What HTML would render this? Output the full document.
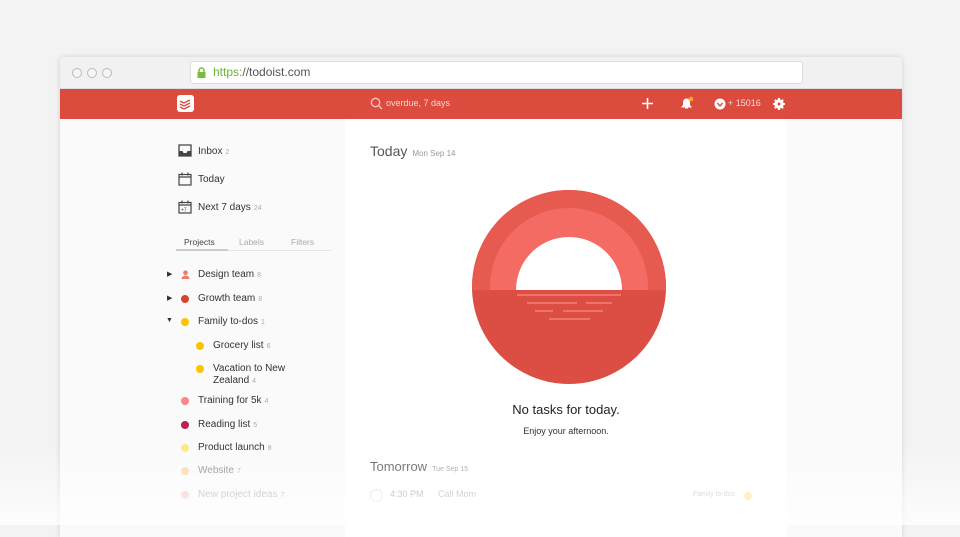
<!DOCTYPE html>
<html><head><style>
*{margin:0;padding:0;box-sizing:border-box}
body{width:960px;height:525px;overflow:hidden;background:#f3f3f3;font-family:"Liberation Sans",sans-serif;position:relative}
.win{position:absolute;left:60px;top:57px;width:842px;height:480px;background:#fafafa;box-shadow:0 0 6px rgba(0,0,0,.15);border-radius:4px 4px 0 0;overflow:hidden}
.chrome{position:absolute;left:0;top:0;width:842px;height:32px;background:#f1f1f1;border-bottom:1px solid #ddd}
.dot{position:absolute;top:11px;width:10px;height:10px;border-radius:50%;border:1px solid #bbb;background:#f5f5f5}
.url{position:absolute;left:130px;top:4px;width:613px;height:23px;background:#fff;border:1px solid #ddd;border-radius:3px;font-size:12px;line-height:21px;color:#555;padding-left:22px}
.bar{position:absolute;left:0;top:32px;width:842px;height:30px;background:#db4c3f}
.side{position:absolute;left:0;top:62px;width:285px;height:420px;background:#fafafa}
.main{position:absolute;left:285px;top:62px;width:442px;height:420px;background:#fff}
.t{position:absolute;font-size:10px;color:#333;white-space:nowrap}
.c{color:#aaa;font-size:7px;margin-left:3px}
.pd{position:absolute;width:8px;height:8px;border-radius:50%}
.fade{position:absolute;left:0;top:445px;width:960px;height:80px;background:linear-gradient(rgba(255,255,255,0),rgba(255,255,255,.8))}
</style></head><body>
<div class="win">
<div class="chrome">
<div class="dot" style="left:12px"></div><div class="dot" style="left:27px"></div><div class="dot" style="left:42px"></div>
<div class="url"><svg style="position:absolute;left:6px;top:5px" width="9" height="11"><path d="M2 5V3.5a2.5 2.5 0 015 0V5" stroke="#7cbc3a" stroke-width="1.5" fill="none"/><rect x="0.5" y="5" width="8" height="6" fill="#7cbc3a"/></svg><span style="color:#6bb33a">https:</span>//todoist.com</div>
</div>
<div class="bar">
<div style="position:absolute;left:117px;top:6px;width:17px;height:17px;background:#fff;border-radius:3px"><svg width="17" height="17"><path d="M3 6l4 2 6-3M3 9l4 2 6-3M3 12l4 2 6-3" stroke="#db4c3f" stroke-width="1.4" fill="none"/></svg></div>
<svg style="position:absolute;left:310px;top:8px" width="13" height="13"><circle cx="5.5" cy="5.5" r="4.2" stroke="#f5c6c1" stroke-width="1.3" fill="none"/><path d="M8.5 8.5l3.5 3.5" stroke="#f5c6c1" stroke-width="1.3"/></svg>
<div class="t" style="left:326px;top:9px;color:#f7d4d0;font-size:9px">overdue, 7 days</div>
<svg style="position:absolute;left:581px;top:8px" width="13" height="13"><path d="M6.5 1v11M1 6.5h11" stroke="#fff" stroke-width="1.6"/></svg>
<svg style="position:absolute;left:620px;top:7px" width="14" height="14"><path d="M2 11h9l-1.5-2V6a3 3 0 00-6 0v3z M5 12h3" fill="#fff" stroke="#fff"/><circle cx="11" cy="3" r="2.3" fill="#f9a825"/></svg>
<svg style="position:absolute;left:654px;top:9px" width="12" height="12"><circle cx="6" cy="6" r="5.5" fill="#fff"/><path d="M3.3 5l2.7 3 2.7-3" stroke="#db4c3f" stroke-width="1.4" fill="none"/></svg>
<div class="t" style="left:668px;top:9px;color:#f9dad6;font-size:9px">+ 15016</div>
<svg style="position:absolute;left:713px;top:9px" width="12" height="12"><circle cx="6" cy="6" r="3.6" fill="none" stroke="#fff" stroke-width="2.2"/><path d="M6 0v12M0 6h12M1.8 1.8l8.4 8.4M10.2 1.8l-8.4 8.4" stroke="#fff" stroke-width="2"/><circle cx="6" cy="6" r="1.5" fill="#db4c3f"/></svg>
</div>
<div class="side">
<svg style="position:absolute;left:118px;top:25px" width="14" height="13"><path d="M1 1h12v11H1z" fill="none" stroke="#444" stroke-width="1.3"/><path d="M1 7h3.5l1 2h3l1-2H13v5H1z" fill="#444"/></svg>
<div class="t" style="left:138px;top:27px">Inbox<span class="c">2</span></div>
<svg style="position:absolute;left:118px;top:53px" width="14" height="14"><rect x="1" y="2.5" width="12" height="10.5" fill="none" stroke="#444" stroke-width="1.2"/><path d="M1 5h12M4 0.5v3M10 0.5v3" stroke="#444" stroke-width="1.2"/></svg>
<div class="t" style="left:138px;top:55px">Today</div>
<svg style="position:absolute;left:118px;top:81px" width="14" height="14"><rect x="1" y="2.5" width="12" height="10.5" fill="none" stroke="#444" stroke-width="1.2"/><path d="M1 5h12M4 0.5v3M10 0.5v3" stroke="#444" stroke-width="1.2"/><text x="3" y="11.5" font-size="5" fill="#444" font-family="Liberation Sans">+7</text></svg>
<div class="t" style="left:138px;top:83px">Next 7 days<span class="c">24</span></div>
<div class="t" style="left:124px;top:118px;font-size:8.5px;color:#444">Projects</div>
<div class="t" style="left:179px;top:118px;font-size:8.5px;color:#aaa">Labels</div>
<div class="t" style="left:231px;top:118px;font-size:8.5px;color:#aaa">Filters</div>
<div style="position:absolute;left:116px;top:131px;width:155px;height:1px;background:#e5e5e5"></div>
<div style="position:absolute;left:116px;top:130px;width:52px;height:2px;background:#ccc"></div>

<div class="t" style="left:107px;top:151px;font-size:7px;color:#333">▶</div>
<svg style="position:absolute;left:121px;top:151px" width="9" height="9"><circle cx="4.5" cy="2.7" r="2.3" fill="#f27a67"/><path d="M0.5 9a4 3.5 0 018 0z" fill="#f27a67"/></svg>
<div class="t" style="left:138px;top:150px">Design team<span class="c">8</span></div>
<div class="t" style="left:107px;top:175px;font-size:7px;color:#333">▶</div>
<div class="pd" style="left:121px;top:176px;background:#d5452c"></div>
<div class="t" style="left:138px;top:174px">Growth team<span class="c">8</span></div>
<div class="t" style="left:106px;top:198px;font-size:7px;color:#333">▼</div>
<div class="pd" style="left:121px;top:199px;background:#fcc400"></div>
<div class="t" style="left:138px;top:197px">Family to-dos<span class="c">1</span></div>
<div class="pd" style="left:136px;top:223px;background:#fcc400"></div>
<div class="t" style="left:153px;top:221px">Grocery list<span class="c">6</span></div>
<div class="pd" style="left:136px;top:246px;background:#fcc400"></div>
<div class="t" style="left:153px;top:244px">Vacation to New</div>
<div class="t" style="left:153px;top:256px">Zealand<span class="c">4</span></div>
<div class="pd" style="left:121px;top:278px;background:#fb8884"></div>
<div class="t" style="left:138px;top:276px">Training for 5k<span class="c">4</span></div>
<div class="pd" style="left:121px;top:302px;background:#b8254a"></div>
<div class="t" style="left:138px;top:300px">Reading list<span class="c">5</span></div>
<div class="pd" style="left:121px;top:325px;background:#fbe983"></div>
<div class="t" style="left:138px;top:323px">Product launch<span class="c">8</span></div>
<div class="pd" style="left:121px;top:348px;background:#fdd7a7"></div>
<div class="t" style="left:138px;top:346px;color:#888">Website<span class="c">7</span></div>
<div class="pd" style="left:121px;top:372px;background:#f3c6c0"></div>
<div class="t" style="left:138px;top:370px;color:#aaa">New project ideas<span class="c">7</span></div>
</div>
<div class="main">
<div class="t" style="left:25px;top:24px;font-size:14px;color:#555">Today<span style="font-size:8px;color:#999;margin-left:5px">Mon Sep 14</span></div>
<svg style="position:absolute;left:126px;top:70px" width="196" height="196">
<defs><clipPath id="top"><rect x="0" y="0" width="196" height="101"/></clipPath></defs>
<circle cx="98" cy="98" r="97" fill="#dc4e43"/>
<g clip-path="url(#top)"><circle cx="98" cy="98" r="97" fill="#e75a50"/><circle cx="98" cy="98" r="79" fill="#f46b63"/><circle cx="98" cy="101" r="53" fill="#fff"/></g>
<g stroke="#f0736a" stroke-width="2"><path d="M46 106h104M56 114h50M115 114h26M64 122h18M92 122h40M78 130h41"/></g>
</svg>
<div class="t" style="left:0;width:442px;text-align:center;top:283px;font-size:13px;color:#222">No tasks for today.</div>
<div class="t" style="left:0;width:442px;text-align:center;top:307px;font-size:9px;color:#333">Enjoy your afternoon.</div>
<div class="t" style="left:25px;top:340px;font-size:13px;color:#555">Tomorrow<span style="font-size:7px;color:#999;margin-left:5px">Tue Sep 15</span></div>
<div style="position:absolute;left:25px;top:370px;width:13px;height:13px;border-radius:50%;border:1px solid #ddd"></div>
<div class="t" style="left:45px;top:370px;font-size:9px;color:#999">4:30 PM</div>
<div class="t" style="left:93px;top:370px;font-size:9px;color:#aaa">Call Mom</div>
<div class="t" style="left:348px;top:372px;font-size:7px;color:#bbb">Family to-dos</div>
<div class="pd" style="left:399px;top:373px;background:#fde58a"></div>
</div>
</div>
<div class="fade"></div>
</body></html>
